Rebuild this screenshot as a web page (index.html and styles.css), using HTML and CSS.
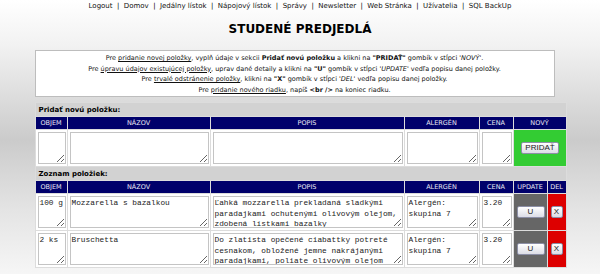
FILE: index.html
```html
<!DOCTYPE html>
<html lang="sk">
<head>
    <meta charset="UTF-8">
    <title>Studené predjedlá</title>
    <link rel="stylesheet" href="styles.css">
</head>
<body>

    <div class="nav">
        <a href="#">Logout</a> &nbsp;|&nbsp; <a href="#">Domov</a> &nbsp;|&nbsp; <a href="#">Jedálny lístok</a> &nbsp;|&nbsp; <a href="#">Nápojový lístok</a> &nbsp;|&nbsp; <a href="#">Správy</a> &nbsp;|&nbsp; <a href="#">Newsletter</a> &nbsp;|&nbsp; <a href="#">Web Stránka</a> &nbsp;|&nbsp; <a href="#">Užívatelia</a> &nbsp;|&nbsp; <a href="#">SQL BackUp</a>
    </div>

    <h1>STUDENÉ PREDJEDLÁ</h1>

    <div class="page">

        <div class="info">
            Pre <u>pridanie novej položky</u>, vyplň údaje v sekcii <b>Pridať novú položku</b> a klikni na <b>"PRIDAŤ"</b> gombík v stĺpci <i>'NOVÝ'</i>.<br>
            Pre <u>úpravu údajov existujúcej položky</u>, uprav dané detaily a klikni na <b>"U"</b> gombík v stĺpci <i>'UPDATE'</i> vedľa popisu danej položky.<br>
            Pre <u>trvalé odstránenie položky</u>, klikni na <b>"X"</b> gombík v stĺpci <i>'DEL'</i> vedľa popisu danej položky.<br>
            Pre <u>pridanie nového riadku</u>, napíš <b>&lt;br /&gt;</b> na koniec riadku.
        </div>

        <table class="items">
            <colgroup>
                <col class="c-objem">
                <col class="c-nazov">
                <col class="c-popis">
                <col class="c-alergen">
                <col class="c-cena">
                <col class="c-update">
                <col class="c-del">
            </colgroup>

            <!-- nova polozka -->
            <tr><td colspan="7" class="section">Pridať novú položku:</td></tr>
            <tr class="head">
                <th>OBJEM</th><th>NÁZOV</th><th>POPIS</th><th>ALERGÉN</th><th>CENA</th><th colspan="2">NOVÝ</th>
            </tr>
            <tr>
                <td><textarea></textarea></td>
                <td><textarea></textarea></td>
                <td><textarea></textarea></td>
                <td><textarea></textarea></td>
                <td><textarea></textarea></td>
                <td colspan="2" class="new"><button class="btn">PRIDAŤ</button></td>
            </tr>

            <!-- zoznam -->
            <tr><td colspan="7" class="section">Zoznam položiek:</td></tr>
            <tr class="head">
                <th>OBJEM</th><th>NÁZOV</th><th>POPIS</th><th>ALERGÉN</th><th>CENA</th><th>UPDATE</th><th>DEL</th>
            </tr>
            <tr>
                <td><textarea>100 g</textarea></td>
                <td><textarea>Mozzarella s bazalkou</textarea></td>
                <td><textarea>Ľahká mozzarella prekladaná sladkými paradajkami ochutenými olivovým olejom, zdobená lístkami bazalky</textarea></td>
                <td><textarea>Alergén: skupina 7</textarea></td>
                <td><textarea>3.20</textarea></td>
                <td class="upd"><button class="btn btn-u">U</button></td>
                <td class="del"><button class="btn btn-x">X</button></td>
            </tr>
            <tr>
                <td><textarea>2 ks</textarea></td>
                <td><textarea>Bruschetta</textarea></td>
                <td><textarea>Do zlatista opečené ciabattky potreté cesnakom, obložené jemne nakrájanými paradajkami, poliate olivovým olejom</textarea></td>
                <td><textarea>Alergén: skupina 7</textarea></td>
                <td><textarea>3.20</textarea></td>
                <td class="upd"><button class="btn btn-u">U</button></td>
                <td class="del"><button class="btn btn-x">X</button></td>
            </tr>
        </table>

    </div>

</body>
</html>
```

FILE: styles.css
```css
/* --- Base --- */
body {
    margin: 0;
    min-height: 274px;
    font-family: 'DejaVu Sans', Verdana, sans-serif;
    font-size: 7px;
    color: #000;
    background: linear-gradient(#ffffff 0, #f2f2f2 45px, #cbcbcb 140px, #e4e4e4 210px, #f6f6f6 274px);
}

a { color: #111; text-decoration: none; }

/* --- Header --- */
.nav {
    text-align: center;
    padding-top: 2px;
    height: 12px;
    line-height: 9px;
    font-size: 7px;
}

h1 {
    margin: 8px 0 0;
    text-align: center;
    font-size: 12px;
    line-height: 15px;
    font-weight: bold;
    height: 28px;
}

/* --- Layout --- */
.page {
    width: 531px;
    margin: 0 auto;
}

.info {
    width: 518px;
    background: #fff;
    border: 1px solid #bdbdbd;
    text-align: center;
    font-size: 6.5px;
    line-height: 10.5px;
    color: #111;
    padding: 2px 0 1px;
}

/* --- Table --- */
.items {
    margin-top: 5px;
    width: 532px;
    table-layout: fixed;
    border-collapse: separate;
    border-spacing: 1px;
    background: #dcdcdc;
}
.c-objem { width: 31px; }
.c-nazov { width: 142px; }
.c-popis { width: 193px; }
.c-alergen { width: 74px; }
.c-cena { width: 33px; }
.c-update { width: 33px; }
.c-del { width: 18px; }

.items td {
    background: #fff;
    padding: 2px 1px 2px 2px;
    vertical-align: middle;
}

.items td.section {
    background: #d2d2d2;
    font-weight: bold;
    font-size: 7px;
    height: 13px;
    padding: 0 3px;
}

.head th {
    background: #00006b;
    color: #e8e8f4;
    font-weight: normal;
    font-size: 6.5px;
    height: 12px;
    padding: 0;
}

textarea {
    display: block;
    width: 100%;
    height: 32px;
    box-sizing: border-box;
    margin: 0;
    padding: 1px 0 1px 1px;
    border: 1px solid #c4c4c4;
    font-family: 'Liberation Mono', 'Courier New', monospace;
    font-size: 7.8px;
    line-height: 10.5px;
    color: #222;
    background: #fff;
    overflow: hidden;
}

.items td.new { background: #33cc33; text-align: center; }
.items td.upd { background: #666666; text-align: center; }
.items td.del { background: #dd0000; text-align: center; padding: 0; }

/* --- Buttons --- */
.btn {
    font-family: 'Liberation Sans', Arial, sans-serif;
    font-size: 8px;
    line-height: 8px;
    padding: 1px 3px;
    border: 1px solid #8c8fa6;
    border-radius: 2px;
    background: linear-gradient(#ffffff, #dcdde6);
    color: #222;
    cursor: pointer;
}
.btn-u { width: 28px; }
.btn-x { width: 12px; padding: 1px 0; }
```
